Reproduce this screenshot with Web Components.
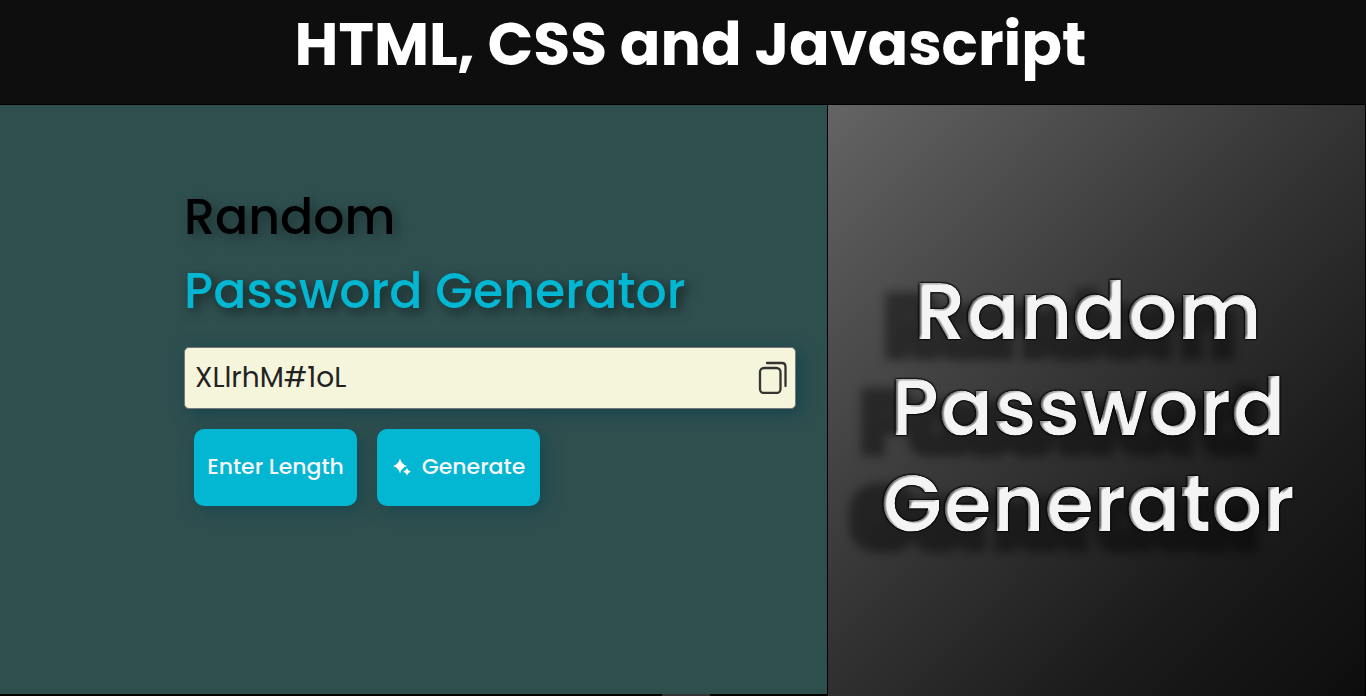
<!DOCTYPE html>
<html lang="en">
<head>
<meta charset="utf-8">
<title>Random Password Generator</title>
<style>
  html, body { height: 100%; margin: 0; }
  body { background: #000; font-family: Poppins, Inter, "Open Sans", sans-serif; }
</style>
</head>
<body>
<showcase-page></showcase-page>
<script>
class ShowcasePage extends HTMLElement {
  constructor() {
    super();
    this.attachShadow({ mode: "open" }).innerHTML = `
      <style>
        :host { display: grid; grid-template-rows: auto 1fr; gap: 1px; min-height: 100vh; }
        main { display: grid; grid-template-columns: 77fr 50fr; gap: 1px; padding-right: 1px; }
        .left { display: grid; grid-template-rows: 1fr 2px; }
        .bar { display: flex; padding-left: 80%; }
        .bar i { flex: none; width: 48px; height: 2px; background: #333; }
      </style>
      <page-header>HTML, CSS and Javascript</page-header>
      <main>
        <div class="left">
          <password-generator></password-generator>
          <div class="bar"><i></i></div>
        </div>
        <embossed-banner>
          <span>Random</span><span>Password</span><span>Generator</span>
        </embossed-banner>
      </main>`;
  }
}

class PageHeader extends HTMLElement {
  constructor() {
    super();
    this.attachShadow({ mode: "open" }).innerHTML = `
      <style>
        :host { display: block; background: #0e0e0e; color: #fff; padding: 0 0 16px 15px; }
        h1 { margin: 0; font-size: 60px; font-weight: 700; line-height: 88px; text-align: center; }
      </style>
      <h1><slot></slot></h1>`;
  }
}

class PasswordGenerator extends HTMLElement {
  constructor() {
    super();
    this.attachShadow({ mode: "open" }).innerHTML = `
      <style>
        :host { display: block; background: #2f4f4f; padding: 75px 31px 0 184px; }
        h2 { margin: 0 0 19px; font-size: 49px; font-weight: 500; line-height: 74px; color: #000;
             text-shadow: 4px 4px 12px rgba(0,0,0,.4); }
        h2 span { display: block; }
        h2 .accent { color: #03b6d1; text-shadow: 4px 4px 12px rgba(0,0,0,.6); }
        .actions { display: flex; gap: 20px; margin: 20px 10px 0; }
      </style>
      <h2><span>Random</span><span class="accent">Password Generator</span></h2>
      <password-field value="XLlrhM#1oL"></password-field>
      <div class="actions">
        <action-button>Enter Length</action-button>
        <action-button sparkle>Generate</action-button>
      </div>`;
  }
}

class PasswordField extends HTMLElement {
  constructor() {
    super();
    this.attachShadow({ mode: "open" }).innerHTML = `
      <style>
        :host { display: flex; align-items: center; box-sizing: border-box; height: 62px;
                border: 1px solid #777; border-radius: 5px; background: #f5f5dc;
                box-shadow: 4px 4px 16px rgba(1,62,77,.6); }
        input { flex: 1; min-width: 0; height: 60px; box-sizing: border-box; border: 0; padding: 0 10px;
                background: none; color: #222; font: 400 28px/60px Poppins, Inter, "Open Sans", sans-serif; outline: 0; }
        button { flex: none; border: 0; padding: 0 0 2px; margin-right: 6px; background: none; display: flex; cursor: pointer; }
      </style>
      <input type="text" aria-label="Generated password" readonly>
      <button type="button" aria-label="Copy password">
        <svg width="32" height="34" viewBox="0 0 32 34" fill="none" stroke="#333" stroke-width="2.300" stroke-linecap="round">
          <rect x="3" y="8" width="20.500" height="25" rx="4"/>
          <path d="M10 3H25Q28.500 3 28.500 7V26"/>
        </svg>
      </button>`;
  }
  connectedCallback() {
    this.shadowRoot.querySelector("input").value = this.getAttribute("value") || "";
  }
}

class ActionButton extends HTMLElement {
  constructor() {
    super();
    this.attachShadow({ mode: "open" }).innerHTML = `
      <style>
        :host { display: block; }
        button { display: flex; align-items: center; justify-content: center; gap: 10px; width: 163px; height: 77px;
                 padding: 0 0 1px; border: 0; border-radius: 10px; background: #03b6d1; color: #f5f5f5;
                 font: 500 22px/32px Poppins, Inter, "Open Sans", sans-serif; white-space: nowrap; cursor: pointer;
                 box-shadow: 4px 4px 16px rgba(1,62,77,.5); }
        svg { display: none; }
        :host([sparkle]) svg { display: block; }
      </style>
      <button type="button">
        <svg width="20" height="20" viewBox="0 0 20 20" fill="#fff" aria-hidden="true">
          <path d="M8 1.500 Q9.500 7.500 15 9 Q9.500 10.500 8 16.500 Q6.500 10.500 1 9 Q6.500 7.500 8 1.500Z"/>
          <path d="M15 11 Q15.900 14 18.800 14.800 Q15.900 15.600 15 18.600 Q14.100 15.600 11.200 14.800 Q14.100 14 15 11Z"/>
        </svg>
        <slot></slot>
      </button>`;
  }
}

class EmbossedBanner extends HTMLElement {
  constructor() {
    super();
    this.attachShadow({ mode: "open" }).innerHTML = `
      <style>
        :host { display: flex; flex-direction: column; align-items: center; justify-content: center; overflow: hidden;
                background: linear-gradient(135deg, #646464, #363636 45%, #1b1b1b 75%, #0d0d0d); }
        svg { position: absolute; width: 0; height: 0; }
        .text { display: flex; flex-direction: column; align-items: center; padding: 12px 38px 0 20px; color: #f4f4f4;
                font-size: 80px; font-weight: 600; line-height: 96px; filter: url(#emboss); }
      </style>
      <svg aria-hidden="true">
        <filter id="emboss" x="-20%" y="-20%" width="140%" height="140%" color-interpolation-filters="sRGB">
          <feMorphology in="SourceAlpha" operator="dilate" radius="6"/>
          <feGaussianBlur stdDeviation="5"/>
          <feOffset dx="-28" dy="15"/>
          <feComponentTransfer result="shadow"><feFuncA type="linear" slope=".42"/></feComponentTransfer>
          <feGaussianBlur in="SourceAlpha" stdDeviation="0.800"/>
          <feComponentTransfer result="edge"><feFuncA type="linear" slope="2"/></feComponentTransfer>
          <feGaussianBlur in="SourceAlpha" stdDeviation="2" result="height"/>
          <feDiffuseLighting in="height" surfaceScale="3" diffuseConstant="1.600" lighting-color="#fff" result="light">
            <feDistantLight azimuth="20" elevation="58"/>
          </feDiffuseLighting>
          <feComposite in="SourceGraphic" in2="light" operator="arithmetic" k1="1" result="lit"/>
          <feComposite in="lit" in2="SourceAlpha" operator="in" result="face"/>
          <feMerge>
            <feMergeNode in="shadow"/><feMergeNode in="edge"/><feMergeNode in="face"/>
          </feMerge>
        </filter>
      </svg>
      <div class="text"><slot></slot></div>`;
  }
}

customElements.define("page-header", PageHeader);
customElements.define("password-field", PasswordField);
customElements.define("action-button", ActionButton);
customElements.define("password-generator", PasswordGenerator);
customElements.define("embossed-banner", EmbossedBanner);
customElements.define("showcase-page", ShowcasePage);
</script>
</body>
</html>
